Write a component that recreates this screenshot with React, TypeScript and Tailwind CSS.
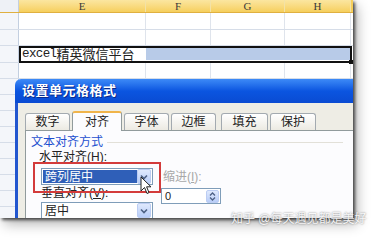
import React from 'react';

const cjk = { fontFamily: '"Liberation Sans", "Noto Sans CJK SC", sans-serif' };

const cols = [
  { w: 'w-[127px]', label: 'E' },
  { w: 'w-[65px]', label: 'F' },
  { w: 'w-[74px]', label: 'G' },
  { w: 'w-[66px]', label: 'H' },
];

function GridRow({ h }: { h: string }) {
  return (
    <div className={`flex ${h} border-b border-[#d6dde8]`}>
      <div className="w-[19px] shrink-0 border-r border-[#c3cfe0] bg-[#f4f6fa]" />
      {cols.map((c) => (
        <div key={c.label} className={`${c.w} shrink-0 border-r border-[#dfe4ec]`} />
      ))}
      <div className="flex-1" />
    </div>
  );
}

function Tab({ label, w, active }: { label: string; w: string; active?: boolean }) {
  if (active) {
    return (
      <div
        className={`${w} h-[20px] -mb-px relative z-10 flex items-center justify-center rounded-t-[3px] border border-b-0 border-[#919b9c] bg-[#fcfcfe] text-[12px] text-[#222] border-t-[2px] border-t-[#f0b44a]`}
      >
        {label}
      </div>
    );
  }
  return (
    <div
      className={`${w} h-[17px] flex items-center justify-center rounded-t-[3px] border border-b-0 border-[#a3aab0] bg-gradient-to-b from-[#ffffff] to-[#eceae2] text-[12px] text-[#222]`}
    >
      {label}
    </div>
  );
}

function ArrowBtn() {
  return (
    <div className="w-[14px] h-[15px] flex items-center justify-center rounded-[2px] bg-gradient-to-b from-[#dfe9fd] to-[#b8cdf8] border border-[#bccdf3]">
      <svg width="8" height="6" viewBox="0 0 8 6">
        <path d="M1 1.5 L4 4.5 L7 1.5" fill="none" stroke="#4d6185" strokeWidth="1.6" />
      </svg>
    </div>
  );
}

export default function App() {
  return (
    <div className="w-[375px] h-[239px] bg-white relative overflow-hidden" style={cjk}>
      {/* screenshot */}
      <div className="relative w-[353px] h-[218px] overflow-hidden bg-white shadow-[2px_2px_3px_rgba(0,0,0,0.65),4px_6px_12px_rgba(0,0,0,0.3)]">
        {/* column header */}
        <div className="flex h-[13px] border-b border-[#e0b040]">
          <div className="w-[19px] shrink-0 bg-[#eef1f6] border-r border-[#c3cfe0]" />
          {cols.map((c) => (
            <div
              key={c.label}
              className={`${c.w} shrink-0 flex items-center justify-center border-r border-[#f3e2a6] bg-gradient-to-b from-[#fbe6a0] to-[#f6cf5c] text-[11px] leading-none text-[#3a3a3a]`}
              style={{ fontFamily: '"Liberation Serif", serif' }}
            >
              {c.label}
            </div>
          ))}
          <div className="flex-1 bg-[#f6cf5c]" />
        </div>
        <GridRow h="h-[17px]" />
        <GridRow h="h-[16px]" />
        {/* selected row */}
        <div className="relative flex h-[17px] border-b border-[#d6dde8]">
          <div className="w-[19px] shrink-0 border-r border-[#c3cfe0] bg-[#f4f6fa]" />
          <div className="w-[127px] shrink-0 flex items-center pl-[3px] text-[13px] leading-none text-[#222]">
            <span style={{ fontFamily: '"Liberation Mono", monospace' }} className="text-[12.5px] tracking-[-0.6px]">excel</span>
            <span>精英微信平台</span>
          </div>
          <div className="flex-1 my-[2px] mr-[3px] bg-[#b8cbe8]" />
          <div className="absolute left-[19px] top-0 right-[1px] -bottom-px border-2 border-[#111]" />
          <div className="absolute right-0 -bottom-[2px] w-[4px] h-[4px] bg-[#111]" />
        </div>
        <GridRow h="h-[16px]" />
        {Array.from({ length: 9 }).map((_, i) => (
          <GridRow key={i} h="h-[16px]" />
        ))}

        {/* dialog */}
        <div className="absolute left-[15px] top-[79px] right-0 bottom-0 flex flex-col">
          <div className="h-[24px] shrink-0 flex items-center pl-[7px] rounded-tl-[6px] bg-gradient-to-b from-[#3d8af7] via-[#0b55e0] to-[#0a4bd2] text-white text-[13px] font-bold tracking-[0.5px] [text-shadow:1px_1px_0_#0a2a8a]">
            设置单元格格式
          </div>
          <div className="flex-1 flex flex-col border-l-[3px] border-[#2256cf] bg-[#eeede5] pl-[7px] pt-[7px]">
            <div className="flex items-end h-[20px] gap-[2px]">
              <Tab label="数字" w="w-[45px]" />
              <Tab label="对齐" w="w-[50px]" active />
              <Tab label="字体" w="w-[45px]" />
              <Tab label="边框" w="w-[45px]" />
              <div className="w-px" />
              <Tab label="填充" w="w-[47px]" />
              <Tab label="保护" w="w-[46px]" />
            </div>
            <div className="relative flex-1 border-t border-l border-[#919b9c] bg-[#fcfcfe] pl-[5px] pt-[4px]">
              <div className="flex items-center h-[14px]">
                <span className="text-[12px] leading-none text-[#1d4fcf]">文本对齐方式</span>
                <div className="flex-1 ml-[4px] mr-[10px] border-t border-[#e2e0d8]" />
              </div>
              <div className="flex">
                <div className="w-[112px] ml-[10px] flex flex-col">
                  <div className="h-[16px] flex items-center text-[12px] leading-none text-[#222] -ml-[2px]">
                    水平对齐(<span className="underline">H</span>):
                  </div>
                  <div className="mt-[3px] h-[17px] flex items-center border border-[#7f9db9] bg-white pl-px pr-px">
                    <div className="w-[95px] h-[13px] flex items-center bg-[#2f5fb8] text-white text-[12px] leading-none pl-[2px]">
                      跨列居中
                    </div>
                    <div className="flex-1" />
                    <ArrowBtn />
                  </div>
                  <div className="h-[16px] flex items-center text-[12px] leading-none text-[#222]">
                    垂直对齐(<span className="underline">V</span>):
                  </div>
                  <div className="mt-px h-[17px] flex items-center border border-[#7f9db9] bg-white pl-[3px] pr-px">
                    <span className="text-[12px] leading-none text-[#222]">居中</span>
                    <div className="flex-1" />
                    <ArrowBtn />
                  </div>
                </div>
                <div className="ml-[8px] flex flex-col pt-[21px]">
                  <div className="h-[14px] flex items-center text-[12px] leading-none text-[#a8a8a8] pl-[2px]">
                    缩进(<span className="underline">I</span>):
                  </div>
                  <div className="mt-[4px] w-[60px] h-[16px] flex items-center border border-[#7f9db9] bg-white pl-[3px] pr-px">
                    <span className="text-[11px] leading-none text-[#222]">0</span>
                    <div className="flex-1" />
                    <div className="w-[13px] h-[13px] flex items-center justify-center rounded-[2px] bg-gradient-to-b from-[#dfe9fd] to-[#b8cdf8] border border-[#bccdf3]">
                      <svg width="7" height="9" viewBox="0 0 7 9">
                        <path d="M1 3.5 L3.5 1 L6 3.5 M1 5.5 L3.5 8 L6 5.5" fill="none" stroke="#4d6185" strokeWidth="1.3" />
                      </svg>
                    </div>
                  </div>
                </div>
              </div>
              {/* red annotation box */}
              <div className="absolute left-[7px] top-[31px] w-[128px] h-[31px] border-2 border-[#d33b3b]" />
              {/* mouse cursor */}
              <svg className="absolute left-[114px] top-[45px]" width="12" height="19" viewBox="0 0 12 19">
                <path d="M1 1 L1 15 L4.5 11.5 L7 17.5 L9 16.6 L6.6 10.8 L11 10.8 Z" fill="#fff" stroke="#222" strokeWidth="1" strokeLinejoin="round" />
              </svg>
            </div>
          </div>
        </div>
      </div>

      {/* watermark */}
      <div className="absolute left-[231px] top-[213px] text-[12px] leading-none text-white/90 [text-shadow:0_0_2px_rgba(0,0,0,0.55)]">
        知乎 @每天遇见都是美好
      </div>
    </div>
  );
}
